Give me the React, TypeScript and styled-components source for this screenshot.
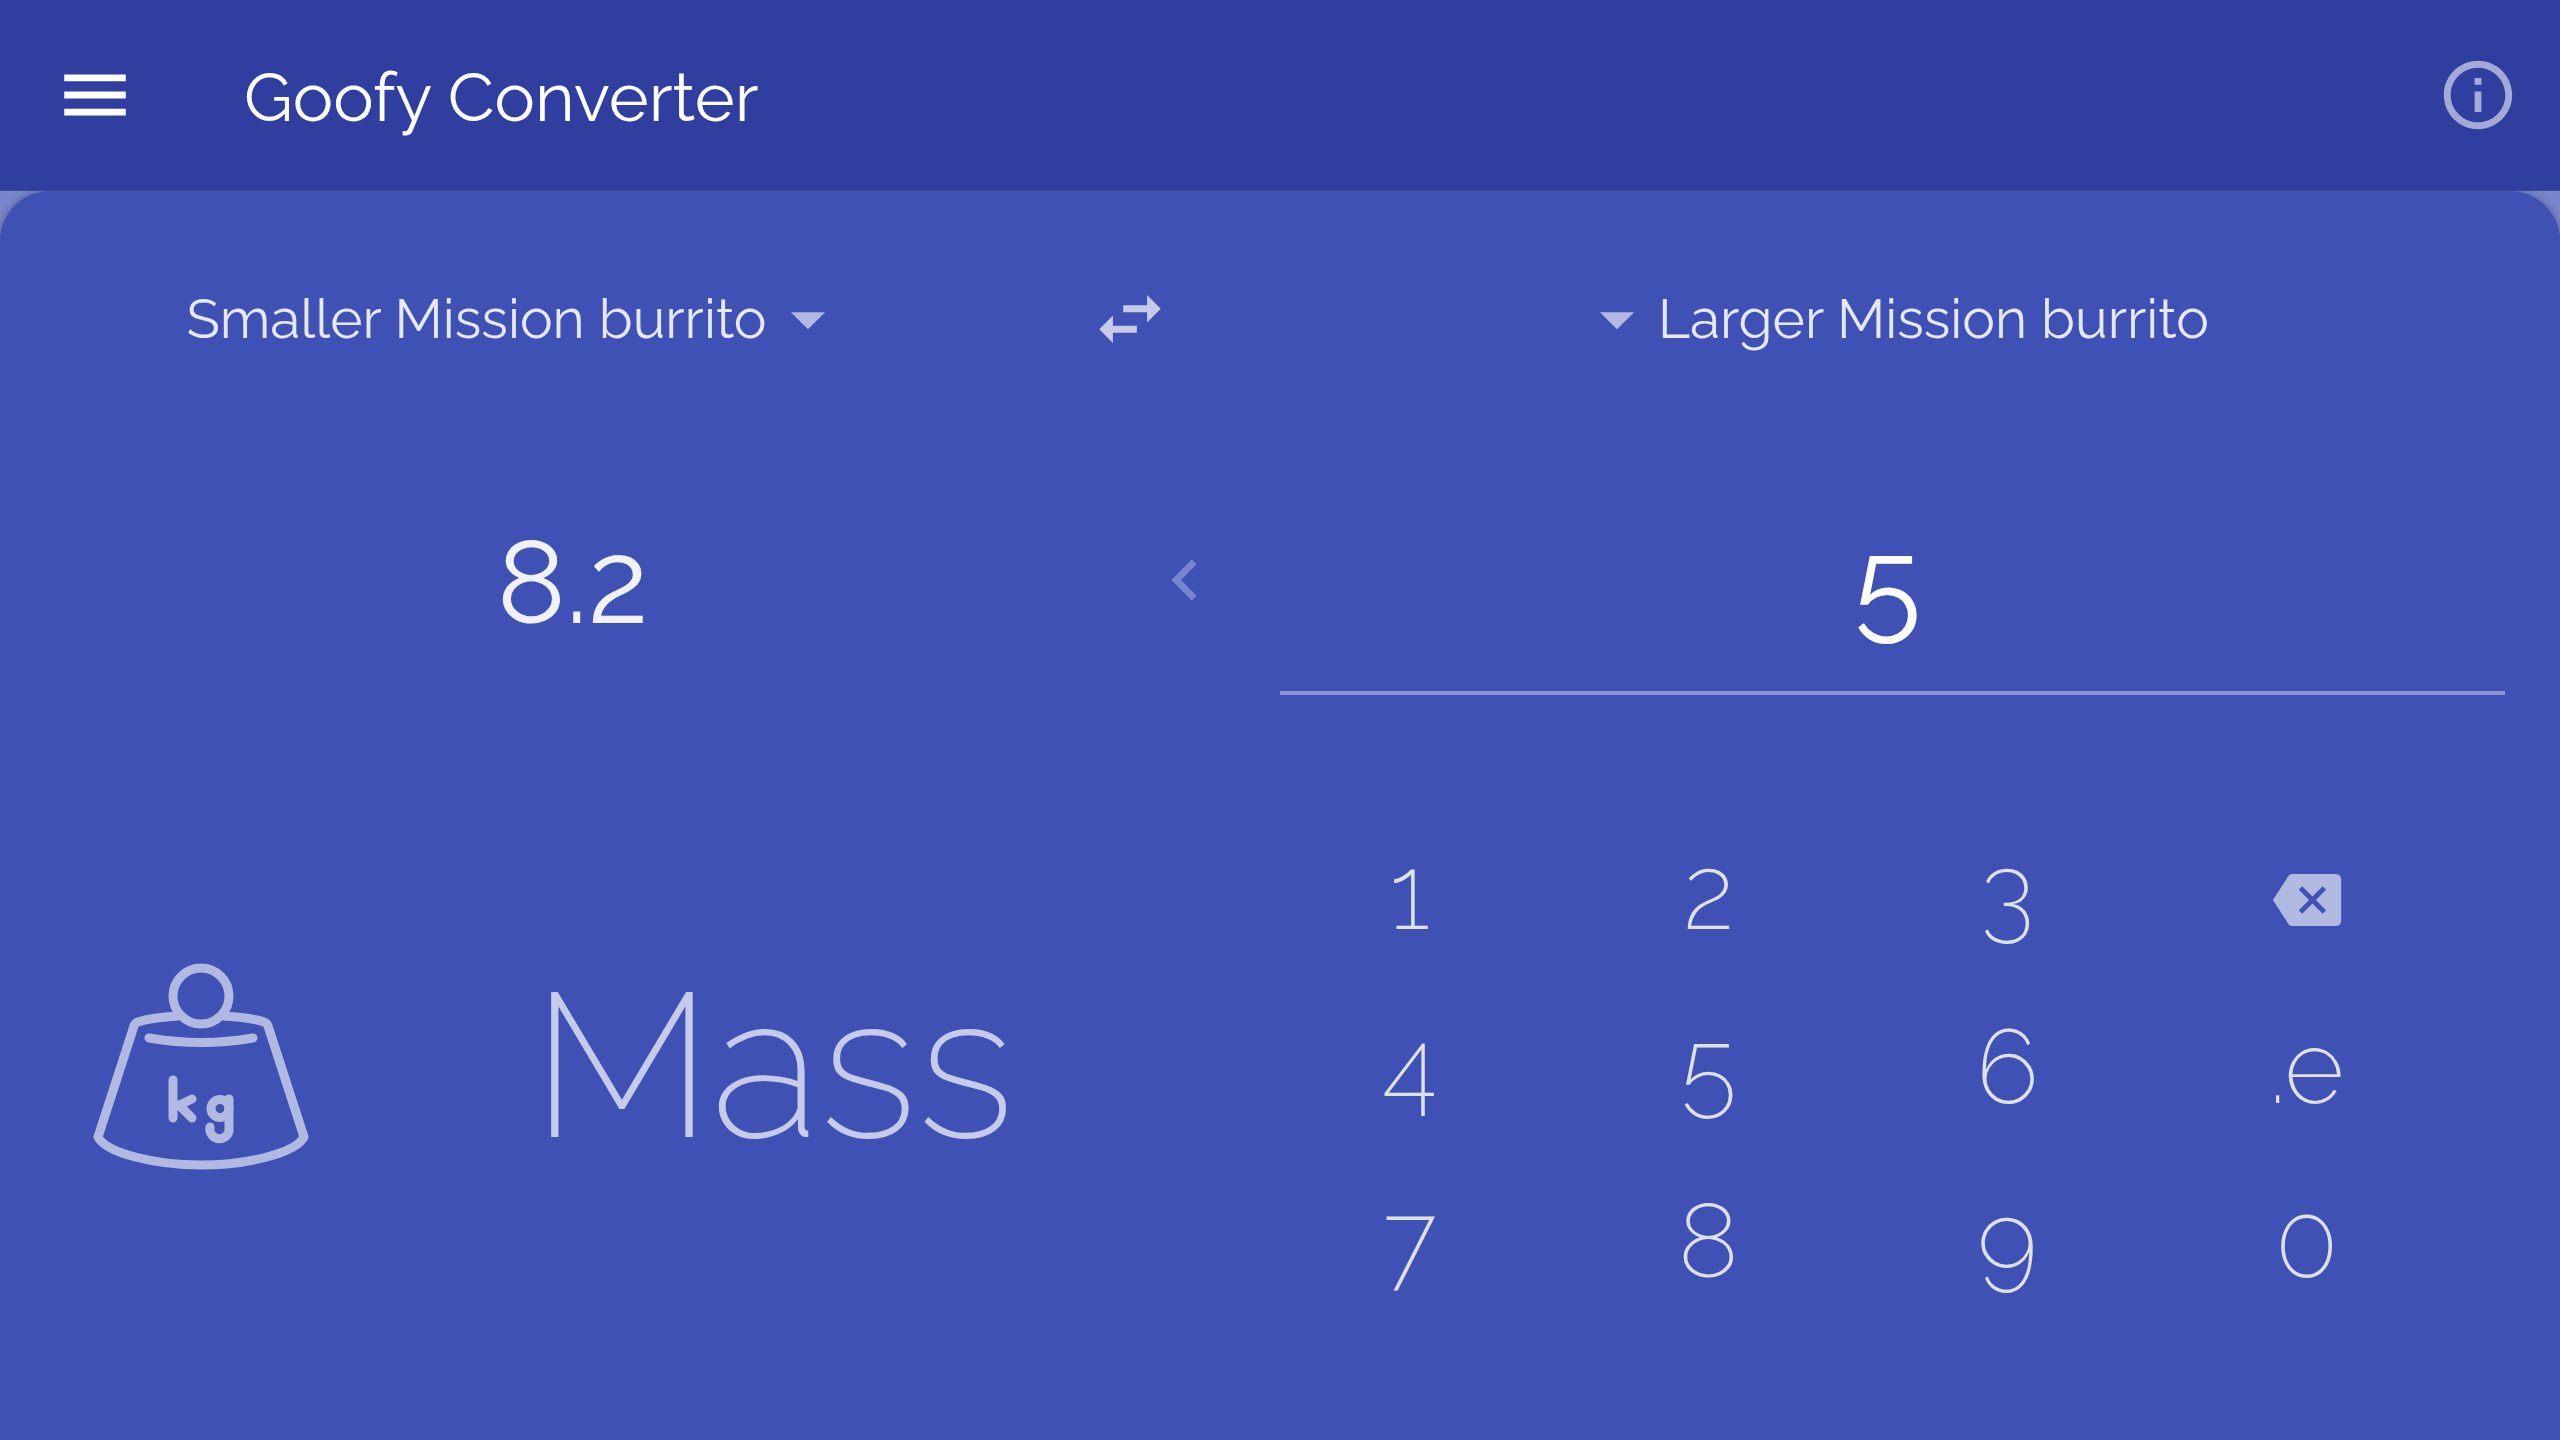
import React, { useState } from "react";
import styled, { createGlobalStyle } from "styled-components";

const GlobalStyle = createGlobalStyle`
  *, *::before, *::after { box-sizing: border-box; }
  html, body, #root { height: 100%; }
  body {
    margin: 0;
    background: #7986cb;
    color: #fff;
    font-family: Raleway, Lato, sans-serif;
  }
  button, input, select {
    margin: 0;
    padding: 0;
    border: 0;
    outline: 0;
    background: none;
    color: inherit;
    font: inherit;
  }
  button, select { cursor: pointer; }
`;

const Page = styled.div`
  display: flex;
  flex-direction: column;
  min-height: 100%;
`;

const Header = styled.header`
  display: flex;
  align-items: center;
  height: 191px;
  padding: 0 41px 0 54px;
  background: #303f9f;
  border-bottom: 1px solid #3c4a94;
`;

const Title = styled.h1`
  flex: 1;
  margin: 0;
  padding: 4px 0 0 108px;
  font-size: 68px;
  font-weight: 400;
  line-height: 80px;
`;

const IconButton = styled.button<{ $alpha: number }>`
  display: flex;
  align-items: center;
  justify-content: center;
  color: rgba(255, 255, 255, ${(p) => p.$alpha});
`;

const Icon = styled.svg`
  display: block;
  width: 82px;
  height: 82px;
  fill: currentColor;
  fill-rule: evenodd;
`;

const Panel = styled.main`
  flex: 1;
  padding-top: 87px;
  border-radius: 50px 50px 0 0;
  background: #3f51b5;
  box-shadow: 0 0 8px rgba(0, 0, 0, 0.3);
`;

const Clip = styled.div`
  display: flex;
  flex: 1;
  flex-direction: column;
  overflow: hidden;
`;

const Columns = styled.div`
  display: grid;
  grid-template-columns: repeat(2, minmax(0, 1fr));
  padding: 0 55px;
`;

const Side = styled.div`
  display: flex;
  align-items: center;
  min-width: 0;
`;

const UnitPicker = styled.label<{ $arrowFirst?: boolean }>`
  display: flex;
  flex: 1;
  flex-direction: ${(p) => (p.$arrowFirst ? "row-reverse" : "row")};
  align-items: center;
  justify-content: center;
  color: rgba(255, 255, 255, 0.6);
`;

const UnitSelect = styled.select`
  appearance: none;
  field-sizing: content;
  height: 82px;
  color: rgba(255, 255, 255, 0.87);
  font-size: 55px;
  line-height: 82px;
  option { color: #303f9f; }
`;

const SwapSlot = styled.div`
  display: flex;
  justify-content: center;
  width: 300px;
`;

const ValueRow = styled(Columns)`
  margin-top: 113px;
`;

const ValueInput = styled.input<{ $active?: boolean }>`
  flex: 1;
  min-width: 0;
  height: 222px;
  padding-right: ${(p) => (p.$active ? 10 : 0)}px;
  border-bottom: 4px solid ${(p) => (p.$active ? "rgba(255, 255, 255, 0.4)" : "transparent")};
  color: rgba(255, 255, 255, ${(p) => (p.$active ? 1 : 0.92)});
  font-size: ${(p) => (p.$active ? 123 : 116)}px;
  line-height: 144px;
  text-align: center;
`;

const Direction = styled.div`
  display: flex;
  justify-content: center;
  width: 190px;
  padding-bottom: 8px;
  color: rgba(255, 255, 255, 0.3);
`;

const Lower = styled.div`
  display: grid;
  grid-template-columns: repeat(2, minmax(0, 1fr));
  margin-top: 110px;
  padding: 0 104px 0 64px;
`;

const Category = styled.section`
  display: flex;
  align-items: center;
  padding-bottom: 2px;
`;

const WeightIcon = styled.svg`
  width: 250px;
  height: 250px;
  margin-left: 16px;
  fill: none;
  stroke: #fff;
  stroke-width: 9;
  stroke-linecap: round;
  stroke-linejoin: round;
  opacity: 0.6;
`;

const CategoryName = styled.h2`
  flex: 1;
  margin: 0;
  padding-right: 44px;
  color: rgba(255, 255, 255, 0.7);
  font-size: 205px;
  font-weight: 200;
  line-height: 240px;
  text-align: center;
`;

const Keypad = styled.div`
  display: grid;
  grid-template-columns: repeat(4, 1fr);
  grid-auto-rows: 174px;
`;

const Key = styled.button`
  color: #e0e0e0;
  font-size: 103px;
  font-weight: 200;
  line-height: 121px;
`;

const EraseKey = styled(IconButton)`
  padding-top: 16px;
`;

const MENU = "M3 18h18v-2H3v2zm0-5h18v-2H3v2zm0-7v2h18V6H3z";
const INFO =
  "M11 17h2v-6h-2v6zm1-15C6.480 2 2 6.480 2 12s4.480 10 10 10 10-4.480 10-10S17.520 2 12 2zm0 18c-4.410 0-8-3.590-8-8s3.590-8 8-8 8 3.590 8 8-3.590 8-8 8zM11 9h2V7h-2v2z";
const SWAP = "M6.990 11L3 15l3.990 4v-3H14v-2H6.990v-3zM21 9l-3.990-4v3H10v2h7.010v3L21 9z";
const CHEVRON_LEFT = "M15.410 7.410L14 6l-6 6 6 6 1.410-1.410L10.830 12z";
const ARROW_DOWN = "M7 10l5 5 5-5z";
const ERASE =
  "M20.500 4.400H7.700c-.500 0-.850.200-1.150.600L2 12l4.550 7c.300.400.650.600 1.150.600H20.500a1.500 1.500 0 0 0 1.500-1.500V5.900a1.500 1.500 0 0 0-1.500-1.500zM13.600 11l3-3 1 1-3 3 3 3-1 1-3-3-3 3-1-1 3-3-3-3 1-1z";

const UNITS = ["Smaller Mission burrito", "Larger Mission burrito"];
const KEYS = ["1", "2", "3", "erase", "4", "5", "6", ".e", "7", "8", "9", "0"];

const Glyph = ({ d }: { d: string }) => (
  <Icon viewBox="0 0 24 24" aria-hidden="true">
    <path d={d} />
  </Icon>
);

function Unit(props: { label: string; value: string; onPick: (u: string) => void; arrowFirst?: boolean }) {
  return (
    <UnitPicker $arrowFirst={props.arrowFirst}>
      <UnitSelect aria-label={props.label} value={props.value} onChange={(e) => props.onPick(e.target.value)}>
        {UNITS.map((u) => (
          <option key={u}>{u}</option>
        ))}
      </UnitSelect>
      <Glyph d={ARROW_DOWN} />
    </UnitPicker>
  );
}

export default function App() {
  const [from, setFrom] = useState(UNITS[0]);
  const [to, setTo] = useState(UNITS[1]);
  const [result, setResult] = useState("8.2");
  const [amount, setAmount] = useState("5");

  const swap = () => {
    setFrom(to);
    setTo(from);
  };
  const press = (key: string) =>
    setAmount((a) => (key === "erase" ? a.slice(0, -1) : a + (key === ".e" ? "." : key)));

  return (
    <Page>
      <GlobalStyle />
      <Header>
        <IconButton $alpha={1} aria-label="Menu">
          <Glyph d={MENU} />
        </IconButton>
        <Title>Goofy Converter</Title>
        <IconButton $alpha={0.56} aria-label="About">
          <Glyph d={INFO} />
        </IconButton>
      </Header>
      <Clip>
        <Panel>
          <Columns>
            <Side>
              <Unit label="Convert from" value={from} onPick={setFrom} />
              <SwapSlot>
                <IconButton $alpha={0.7} aria-label="Swap units" onClick={swap}>
                  <Glyph d={SWAP} />
                </IconButton>
              </SwapSlot>
            </Side>
            <Side>
              <Unit label="Convert to" value={to} onPick={setTo} arrowFirst />
            </Side>
          </Columns>
          <ValueRow>
            <Side>
              <ValueInput aria-label="Result" value={result} onChange={(e) => setResult(e.target.value)} />
              <Direction>
                <Glyph d={CHEVRON_LEFT} />
              </Direction>
            </Side>
            <Side>
              <ValueInput $active aria-label="Amount" value={amount} onChange={(e) => setAmount(e.target.value)} />
            </Side>
          </ValueRow>
          <Lower>
            <Category>
              <WeightIcon viewBox="0 0 250 250" aria-hidden="true">
                <circle cx="121" cy="56" r="28" />
                <path d="M98 76C80 77 67 79 58 82Q55 83 54 86L18 197C26 213 75 225 121 225S216 213 224 197L188 86Q187 83 184 82C175 79 162 77 144 76" />
                <path d="M69 98Q121 107 173 98" />
                <path d="M93 140v38M112 159L93 168M100 166l12 12" />
                <circle cx="140" cy="168.500" r="9" />
                <path d="M149 159v32a9.500 9.500 0 0 1-19-4" />
              </WeightIcon>
              <CategoryName>Mass</CategoryName>
            </Category>
            <Keypad>
              {KEYS.map((k) =>
                k === "erase" ? (
                  <EraseKey key={k} $alpha={0.6} aria-label="Delete digit" onClick={() => press(k)}>
                    <Glyph d={ERASE} />
                  </EraseKey>
                ) : (
                  <Key key={k} onClick={() => press(k)}>{k}</Key>
                )
              )}
            </Keypad>
          </Lower>
        </Panel>
      </Clip>
    </Page>
  );
}
